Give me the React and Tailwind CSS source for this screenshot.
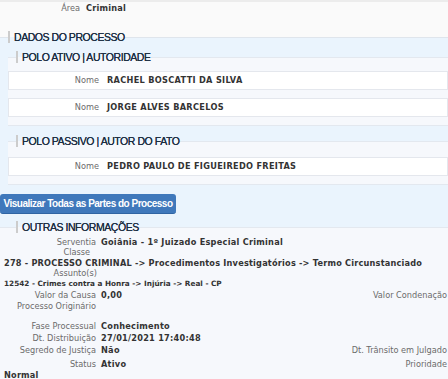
import React from "react";

const LEGEND =
  "border-l-2 border-[#cccccc] pl-[4px] h-[12px] leading-[12px] text-[10.5px] tracking-[-0.45px] text-[#1c2e42] [text-shadow:0_0_0.4px_#1c2e42] font-['Liberation_Sans',Arial,sans-serif]";

function NomeRow({ value }) {
  return (
    <div className="flex items-center h-[19px] bg-white border border-[#e4e7ed]">
      <span className="w-[90px] text-right text-[#6b6b6b]">Nome</span>
      <span className="ml-[8px] font-bold tracking-[0.3px] text-[#333]">{value}</span>
    </div>
  );
}

function Field({ label, value, right, h }) {
  return (
    <div className={"flex items-center " + (h || "h-[12px]")}>
      <span className="w-[96px] shrink-0 text-right text-[#6b6b6b] whitespace-nowrap">{label}</span>
      {value && <span className="ml-[5px] font-bold tracking-[0.25px]">{value}</span>}
      {right && <span className="ml-auto pr-[1px] text-[#6b6b6b]">{right}</span>}
    </div>
  );
}

export default function App() {
  return (
    <div className="w-[448px] h-[379px] overflow-hidden bg-[#fafafa] text-[8.2px] text-[#333] font-['DejaVu_Sans',Verdana,sans-serif] border-t-2 border-[#ececec]">
      <div className="flex items-center h-[12px]">
        <span className="w-[80px] text-right text-[#6b6b6b]">Área</span>
        <span className="ml-[6px] font-bold tracking-[0.2px]">Criminal</span>
      </div>
      <div className="h-[17px]" />

      <fieldset className="border-t border-[#dfe5ec] bg-[#eaf4fd]">
        <legend className={"ml-[8px] " + LEGEND}>DADOS DO PROCESSO</legend>

        <fieldset className="mt-[8px] ml-[8px] pt-[8px] pb-[8px] border-t border-b border-[#e3e8ef] bg-[#f6f8fc]">
          <legend className={"ml-[8px] " + LEGEND}>POLO ATIVO | AUTORIDADE</legend>
          <div className="flex flex-col gap-[8px]">
            <NomeRow value="RACHEL BOSCATTI DA SILVA" />
            <NomeRow value="JORGE ALVES BARCELOS" />
          </div>
        </fieldset>

        <fieldset className="mt-[9px] ml-[8px] pt-[10px] pb-[8px] border-t border-b border-[#e3e8ef] bg-[#f6f8fc]">
          <legend className={"ml-[8px] " + LEGEND}>POLO PASSIVO | AUTOR DO FATO</legend>
          <NomeRow value="PEDRO PAULO DE FIGUEIREDO FREITAS" />
        </fieldset>

        <button className="mt-[9px] h-[20px] w-[176px] rounded-[3px] bg-[#3f78bb] border-b border-[#2f64a3] text-white font-bold text-[10px] tracking-[-0.5px] font-['Liberation_Sans',Arial,sans-serif]">
          Visualizar Todas as Partes do Processo
        </button>

        <fieldset className="mt-[7px] pt-[3px] border-t border-[#e3e8ef] bg-[#f6f8fc]">
          <legend className={"ml-[16px] " + LEGEND}>OUTRAS INFORMAÇÕES</legend>

          <Field label="Serventia" value="Goiânia - 1º Juizado Especial Criminal" />
          <div className="flex items-center h-[9px]">
            <span className="w-[90px] text-right text-[#6b6b6b]">Classe</span>
          </div>
          <div className="flex items-center h-[12px] pl-[4px] font-bold tracking-[0.2px] whitespace-nowrap">
            278 - PROCESSO CRIMINAL -&gt; Procedimentos Investigatórios -&gt; Termo Circunstanciado
          </div>
          <div className="flex items-center h-[9px]">
            <span className="w-[97px] text-right text-[#6b6b6b]">Assunto(s)</span>
          </div>
          <div className="flex items-center h-[12px] pl-[4px] font-bold text-[7.3px] whitespace-nowrap">
            12542 - Crimes contra a Honra -&gt; Injúria -&gt; Real - CP
          </div>
          <Field label="Valor da Causa" value="0,00" right="Valor Condenação" h="h-[10px]" />
          <Field label="Processo Originário" h="h-[13px]" />
          <div className="h-[7px]" />
          <Field label="Fase Processual" value="Conhecimento" />
          <Field label="Dt. Distribuição" value="27/01/2021 17:40:48" />
          <Field label="Segredo de Justiça" value="Não" right="Dt. Trânsito em Julgado" />
          <div className="h-[2px]" />
          <Field label="Status" value="Ativo" right="Prioridade" />
          <div className="flex items-center h-[10px] pl-[4px] font-bold tracking-[0.2px]">Normal</div>
        </fieldset>
      </fieldset>
    </div>
  );
}
